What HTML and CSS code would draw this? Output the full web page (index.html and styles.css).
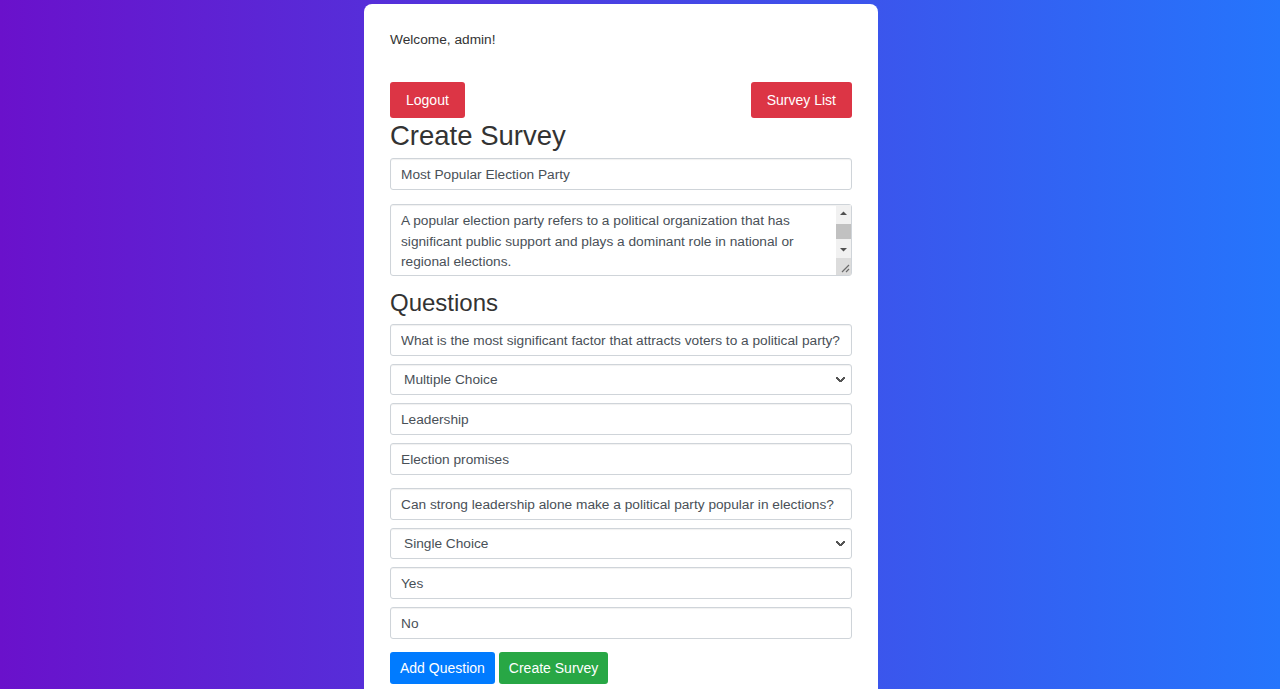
FILE: index.html
```html
<!DOCTYPE html>
<html lang="en">
<head>
<meta charset="utf-8">
<title>Create Survey</title>
<link rel="stylesheet" href="styles.css">
</head>
<body>
<div class="card">
  <p class="welcome">Welcome, admin!</p>
  <div class="top-actions">
    <button class="btn btn-danger btn-lg">Logout</button>
    <button class="btn btn-danger btn-lg">Survey List</button>
  </div>
  <h2 class="title">Create Survey</h2>
  <input class="form-control title-input" type="text" value="Most Popular Election Party">
  <div class="desc-wrap">
    <textarea class="form-control desc">A popular election party refers to a political organization that has significant public support and plays a dominant role in national or regional elections.</textarea>
    <div class="fake-scroll" aria-hidden="true">
      <div class="sb-btn">
        <svg width="15" height="16" viewBox="0 0 15 16"><path d="M4 10 L7.5 6.5 L11 10 Z" fill="#505050"/></svg>
      </div>
      <div class="sb-track"><div class="sb-thumb"></div></div>
      <div class="sb-btn">
        <svg width="15" height="16" viewBox="0 0 15 16"><path d="M4 6 L7.5 9.5 L11 6 Z" fill="#505050"/></svg>
      </div>
      <div class="sb-corner">
        <svg width="15" height="17" viewBox="0 0 15 17"><path d="M13 7 L6 14 M13 11 L10 14" stroke="#6a6a6a" stroke-width="1.2" fill="none"/></svg>
      </div>
    </div>
  </div>
  <h3 class="subtitle">Questions</h3>
  <div class="question">
    <input class="form-control" type="text" value="What is the most significant factor that attracts voters to a political party?">
    <select class="form-control select">
      <option selected>Multiple Choice</option>
      <option>Single Choice</option>
    </select>
    <input class="form-control" type="text" value="Leadership">
    <input class="form-control" type="text" value="Election promises">
  </div>
  <div class="question">
    <input class="form-control" type="text" value="Can strong leadership alone make a political party popular in elections?">
    <select class="form-control select">
      <option>Multiple Choice</option>
      <option selected>Single Choice</option>
    </select>
    <input class="form-control" type="text" value="Yes">
    <input class="form-control" type="text" value="No">
  </div>
  <div class="bottom-actions">
    <button class="btn btn-primary">Add Question</button>
    <button class="btn btn-success">Create Survey</button>
  </div>
</div>
</body>
</html>
```

FILE: styles.css
```css
html, body {
  margin: 0;
  padding: 0;
  height: 100%;
}
body {
  background: linear-gradient(to right, #6a11cb, #2575fc);
  font-family: "Liberation Sans", Arial, sans-serif;
  color: #333;
  overflow: hidden;
}
.card {
  box-sizing: border-box;
  width: 514px;
  margin: 4px 0 0 364px;
  background: #fff;
  border-radius: 8px;
  padding: 26px 26px 40px;
}
.welcome {
  margin: 0;
  font-size: 13.7px;
  line-height: 20px;
}
.top-actions {
  display: flex;
  justify-content: space-between;
  margin-top: 32px;
}
.btn {
  font-family: "Liberation Sans", Arial, sans-serif;
  font-size: 14px;
  line-height: 16px;
  color: #fff;
  border: none;
  border-radius: 3px;
  padding: 8px 10px;
  cursor: pointer;
}
.btn-lg {
  padding: 10px 16px;
}
.btn-danger { background: #dc3545; }
.btn-primary { background: #007bff; }
.btn-success { background: #28a745; }
.title {
  margin: 0 0 6px;
  padding-top: 1px;
  font-size: 27.5px;
  font-weight: normal;
  line-height: 33px;
  color: #333;
}
.subtitle {
  margin: 12px 0 7px;
  font-size: 24px;
  font-weight: normal;
  line-height: 29px;
  color: #333;
}
.form-control {
  display: block;
  box-sizing: border-box;
  width: 100%;
  height: 32px;
  margin: 0 0 8px;
  padding: 6px 10px;
  font-family: "Liberation Sans", Arial, sans-serif;
  font-size: 13.7px;
  line-height: 18px;
  color: #495057;
  background: #fff;
  border: 1px solid #cfd4d9;
  border-radius: 3px;
  box-shadow: inset 0 1px 1px rgba(0,0,0,0.06);
}
.title-input {
  margin-bottom: 14px;
}
.desc-wrap {
  position: relative;
}
.desc {
  height: 72px;
  padding: 6px 10px 26px;
  line-height: 20.5px;
  resize: none;
  overflow-y: scroll;
  margin-bottom: 0;
}
.desc::-webkit-scrollbar {
  width: 15px;
}
.fake-scroll {
  position: absolute;
  top: 1px;
  right: 1px;
  bottom: 1px;
  width: 15px;
  display: flex;
  flex-direction: column;
  background: #f1f1f1;
  pointer-events: none;
}
.sb-btn {
  height: 16px;
  flex: none;
}
.sb-btn svg,
.sb-corner svg {
  display: block;
}
.sb-track {
  flex: 1;
  padding: 3px 0 2px;
}
.sb-thumb {
  height: 15px;
  background: #c1c1c1;
}
.sb-corner {
  height: 17px;
  flex: none;
  background: #dcdcdc;
}
.select {
  height: 31px;
  padding: 5px 24px 5px 13px;
  -webkit-appearance: none;
  appearance: none;
  background-image:
    linear-gradient(45deg, transparent 34%, #555 34%, #555 66%, transparent 66%),
    linear-gradient(135deg, transparent 34%, #555 34%, #555 66%, transparent 66%);
  background-position: calc(100% - 10px) 50%, calc(100% - 6px) 50%;
  background-size: 5px 5px, 5px 5px;
  background-repeat: no-repeat;
}
.question {
  margin-bottom: 13px;
}
.question .form-control:last-child {
  margin-bottom: 0;
}
.bottom-actions {
  display: flex;
  gap: 4px;
}
```
